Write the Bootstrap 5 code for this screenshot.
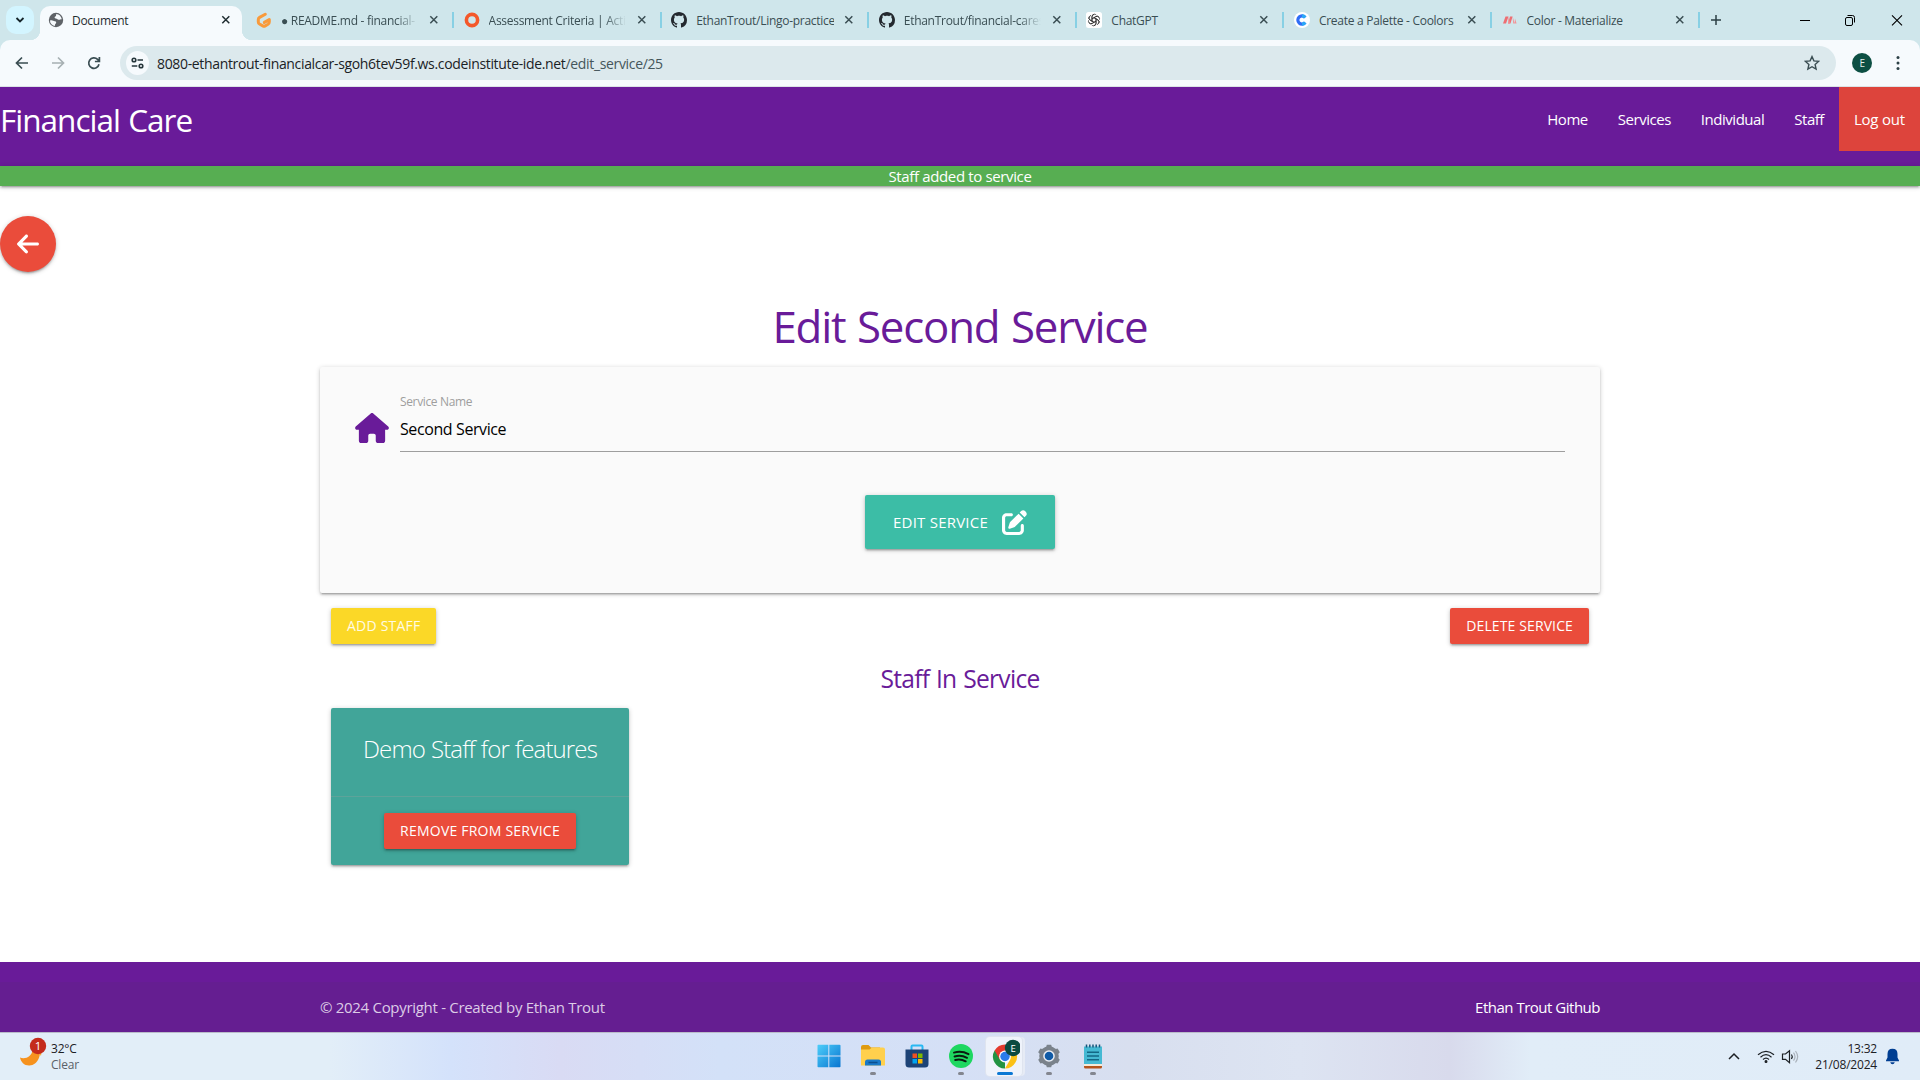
<!DOCTYPE html>
<html lang="en">
<head>
<meta charset="utf-8">
<meta name="viewport" content="width=device-width, initial-scale=1">
<title>Document</title>
<link href="https://cdn.jsdelivr.net/npm/bootstrap@5.3.0/dist/css/bootstrap.min.css" rel="stylesheet">
<style>
  body { width: 1920px; height: 1080px; overflow: hidden; font-family: "Open Sans", sans-serif; font-size: 15px; letter-spacing: -.36px; line-height: 1.5; color: #000; background: #fff; }
  a { text-decoration: none; }
  svg { display: block; flex: none; }
  .shade { box-shadow: 0 2px 2px 0 rgba(0,0,0,.14), 0 3px 1px -2px rgba(0,0,0,.12), 0 1px 5px 0 rgba(0,0,0,.2); }

  /* browser window */
  .tabstrip { height: 40px; background: #cfe6eb; padding-left: 6px; font-size: 12px; letter-spacing: -.28px; color: #3a4e53; }
  .tab-search { width: 28px; height: 28px; margin-top: 6px; border-radius: 10px; background: #d3f5ff; }
  .tab-open { position: relative; width: 202px; height: 34px; margin: 6px 4.4px 0 6px; padding: 0 11px 6px 8px; border-radius: 10px 10px 0 0; background: #f6fafd; color: #1f2c30; }
  .tab-open::before, .tab-open::after { content: ""; position: absolute; bottom: 0; width: 10px; height: 10px; }
  .tab-open::before { left: -10px; background: radial-gradient(circle at 0 0, transparent 10px, #f6fafd 10.5px); }
  .tab-open::after { right: -10px; background: radial-gradient(circle at 100% 0, transparent 10px, #f6fafd 10.5px); }
  .tab-idle { width: 207.6px; height: 40px; padding: 0 15px 0 9.6px; background: linear-gradient(#87d0e4,#87d0e4) right 0 top 12px/2px 16px no-repeat; }
  .tab-text { width: 138px; margin-left: 9px; padding-top: 2px; overflow: hidden; white-space: nowrap; }
  .tab-text.fade-end { -webkit-mask-image: linear-gradient(90deg, #000 115px, transparent 137px); mask-image: linear-gradient(90deg, #000 115px, transparent 137px); }
  .toolbar { height: 47px; background: #cfe6eb; }
  .toolbar-in { height: 47px; padding: 0 11px 0 14px; border-radius: 10px 10px 0 0; background: #f6fafd; border-bottom: 1px solid #dbe3e6; }
  .omnibox { width: 1716px; height: 34px; padding: 0 16px 0 6px; border-radius: 17px; background: #dce9ed; font-size: 14px; letter-spacing: -.34px; color: #45565b; margin-left: 17px; }
  .omnibox b { font-weight: 400; color: #1a2225; }
  .site-info { width: 23px; height: 24px; border-radius: 50%; background: #f6fafd; margin-right: 8px; }
  .avatar { width: 20px; height: 20px; border-radius: 50%; background: #0d4f43; color: #e5efed; font-size: 10px; }

  /* page */
  .page-nav { height: 79px; background: #691b99; }
  .site-name { font-size: 31.5px; letter-spacing: -.98px; word-spacing: 1px; line-height: 64px; color: #fff; margin-top: 1px; }
  .page-nav .links { letter-spacing: -.47px; }
  .page-nav .links a { height: 64px; line-height: 64px; padding: 0 15px; color: #fff; display: block; }
  .page-nav .links .exit { background: #dd443c; letter-spacing: -.2px; }
  .flash { height: 20px; line-height: 21px; background: #57ae52; color: #fff; }
  .back { width: 56px; height: 56px; border-radius: 50%; background: #ea4c3b; margin-top: 30px; }
  .purple { color: #691b99; }
  .wrap { width: 1280px; margin: 0 auto; }
  .heading { font-size: 43.8px; letter-spacing: -1.22px; word-spacing: 1.5px; line-height: 48px; margin: 30px 0 17px; }
  .panel { height: 226px; background: #fafafa; border-radius: 2px; padding: 24px 35px 0; }
  .house { margin-top: 22px; }
  .field { margin-left: 11px; }
  .f-label { font-size: 12px; line-height: 18px; color: #9e9e9e; margin-top: 2px; }
  .f-value { height: 41px; border-bottom: 1px solid #9e9e9e; font-size: 16px; line-height: 36px; letter-spacing: -.4px; }
  .submit-row { margin-top: 43px; }
  .mbtn { display: inline-flex; align-items: center; justify-content: center; height: 36px; padding-bottom: 2px; border-radius: 2px; color: #fff; font-size: 14px; letter-spacing: .22px; }
  .mbtn.delete { letter-spacing: .12px; }
  .mbtn-lg { width: 190px; height: 54px; padding-bottom: 0; background: #3cbda6; font-size: 15px; gap: 14px; }
  .red { background: #ea4c3b; }
  .yellow { background: #fbd827; color: #fffbe4; }
  .actions { padding: 15px 11px 0; }
  .subhead { font-size: 24.6px; letter-spacing: -.72px; word-spacing: 1px; line-height: 27px; margin: 21px 0 16px; }
  .person { width: 298px; height: 157px; border-radius: 2px; background: #41a599; margin-left: 11px; }
  .person-name { height: 88px; line-height: 82px; font-size: 24px; font-weight: 300; letter-spacing: -.86px; word-spacing: .6px; color: #fff; }
  .person-act { height: 69px; border-top: 1px solid rgba(160,160,160,.3); }
  .page-foot { height: 70px; background: linear-gradient(#691b99 20px, #651e91 20px); padding-top: 20px; color: #dccbe6; letter-spacing: -.3px; line-height: 50px; }
  .page-foot a { color: #fff; letter-spacing: -.49px; }

  /* taskbar */
  .taskbar { height: 48px; border-top: 1px solid #b9bcc9; font-size: 12px; line-height: 16px; letter-spacing: -.2px; color: #1c2024;
    background: linear-gradient(90deg, #e2eef8 0, #e2eef8 330px, #d4e2fb 450px, #d9dbf4 560px, #d3e1f8 720px, #d5e0f6 960px, #d8dfef 1130px, #dde4f2 1300px, #d8daec 1450px, #e1edf8 1530px, #e0ecf8 100%); }
  .side { width: 806.5px; }
  .weather { margin-left: 3px; padding-top: 4px; }
  .weather span { color: #5a6168; }
  .task { position: relative; width: 44.1px; height: 47px; padding-bottom: 1px; }
  .task::after { content: ""; position: absolute; left: 50%; top: 39px; width: 6px; height: 3px; margin-left: -3px; border-radius: 2px; }
  .task.running::after { background: #83868f; }
  .task.current::after { width: 16px; margin-left: -8px; background: #0a78d4; }
  .task.current::before { content: ""; position: absolute; left: 3px; top: 4px; width: 36px; height: 39px; border-radius: 4px; background: #eff3fb; box-shadow: 0 0 0 1px #dfe4ef, 3px 0 0 0 #e6ebf5; }
  .task svg { position: relative; }
  .tray { padding-right: 20px; }
  .clock { margin: 0 8px 0 15px; }
</style>
<script src="https://cdn.jsdelivr.net/npm/bootstrap@5.3.0/dist/js/bootstrap.bundle.min.js"></script>
</head>
<body class="d-flex flex-column">
<svg width="0" height="0" class="position-absolute">
  <symbol id="x" viewBox="0 0 10 10"><path d="M1.3 1.3l7 7m0-7l-7 7" stroke="currentColor" stroke-width="1.5" fill="none"/></symbol>
  <symbol id="gh" viewBox="0 0 16 16"><path fill="#24292f" d="M8 0C3.58 0 0 3.58 0 8c0 3.54 2.29 6.53 5.47 7.59.4.07.55-.17.55-.38 0-.19-.01-.82-.01-1.49-2.01.37-2.53-.49-2.69-.94-.09-.23-.48-.94-.82-1.13-.28-.15-.68-.52-.01-.53.63-.01 1.08.58 1.23.82.72 1.21 1.87.87 2.33.66.07-.52.28-.87.51-1.07-1.78-.2-3.64-.89-3.64-3.95 0-.87.31-1.59.82-2.15-.08-.2-.36-1.02.08-2.12 0 0 .67-.21 2.2.82.64-.18 1.32-.27 2-.27s1.36.09 2 .27c1.53-1.04 2.2-.82 2.2-.82.44 1.1.16 1.92.08 2.12.51.56.82 1.27.82 2.15 0 3.07-1.87 3.75-3.65 3.95.29.25.54.73.54 1.48 0 1.07-.01 1.93-.01 2.2 0 .21.15.46.55.38A8.01 8.01 0 0016 8c0-4.42-3.58-8-8-8z"/></symbol>
</svg>

<div class="tabstrip d-flex">
  <div class="tab-search d-flex align-items-center justify-content-center"><svg width="10" height="10" viewBox="0 0 10 10"><path d="M1.5 3L5 6.5 8.5 3" fill="none" stroke="#16262b" stroke-width="1.8"/></svg></div>
  <div class="tab-open d-flex align-items-center">
    <svg width="16" height="16" viewBox="0 0 16 16"><circle cx="8" cy="8" r="7.2" fill="#5f6368"/><path d="M2 8.5c2.500-.8 3.200.6 4.800.8 1.800.2 1.700 1.700.8 2.500-.9.8-.4 1.700-.9 2.200C4 13.300 1.900 11.300 2 8.500zM8.300 1.900c-.6 1.400.300 1.900-1 2.600-1.200.6-.7 1.900.500 1.900 1.300 0 1.500.9 2.800 1.300 1.300.3 1.700-.6 3.200-.5C13.200 4.200 11.200 2 8.300 1.900z" fill="#f6fafd"/></svg>
    <span class="tab-text ms-2">Document</span>
    <svg class="ms-auto" width="10" height="10"><use href="#x"/></svg>
  </div>
  <div class="tab-idle d-flex align-items-center">
    <svg width="16" height="17" viewBox="0 0 16 17"><path d="M9.300 2.200L3.600 5.400Q2.300 6.200 2.300 7.600V10q0 1.300 1.200 2L6.800 13.900q1.200.7 2.400 0L12 12.300q1.300-.8 1.300-2.200V7.600L8.300 10.400" fill="none" stroke="#f99a3a" stroke-width="3" stroke-linecap="round" stroke-linejoin="round"/></svg>
    <span class="tab-text fade-end">● README.md - financial-</span><svg class="ms-auto" width="10" height="10"><use href="#x"/></svg>
  </div>
  <div class="tab-idle d-flex align-items-center">
    <svg width="16" height="16" viewBox="0 0 16 16"><circle cx="8" cy="8" r="5.600" fill="none" stroke="#f4582a" stroke-width="3.600"/></svg>
    <span class="tab-text fade-end">Assessment Criteria | Activ</span><svg class="ms-auto" width="10" height="10"><use href="#x"/></svg>
  </div>
  <div class="tab-idle d-flex align-items-center">
    <svg width="16" height="16"><use href="#gh"/></svg>
    <span class="tab-text">EthanTrout/Lingo-practice</span><svg class="ms-auto" width="10" height="10"><use href="#x"/></svg>
  </div>
  <div class="tab-idle d-flex align-items-center">
    <svg width="16" height="16"><use href="#gh"/></svg>
    <span class="tab-text fade-end">EthanTrout/financial-cares</span><svg class="ms-auto" width="10" height="10"><use href="#x"/></svg>
  </div>
  <div class="tab-idle d-flex align-items-center">
    <svg width="16" height="16" viewBox="0 0 16 16"><rect width="16" height="16" rx="2.500" fill="#fff"/><g fill="none" stroke="#333" stroke-width=".8"><path id="petal" d="M6 9.200V4.800Q6 2.300 8.200 2.200 9.600 2.200 10.400 3.200M6 6.800L9.800 4.600Q11.600 3.800 12.900 5.300"/><use href="#petal" transform="rotate(60 8 8)"/><use href="#petal" transform="rotate(120 8 8)"/><use href="#petal" transform="rotate(180 8 8)"/><use href="#petal" transform="rotate(240 8 8)"/><use href="#petal" transform="rotate(300 8 8)"/></g></svg>
    <span class="tab-text">ChatGPT</span><svg class="ms-auto" width="10" height="10"><use href="#x"/></svg>
  </div>
  <div class="tab-idle d-flex align-items-center">
    <svg width="16" height="16" viewBox="0 0 16 16"><circle cx="8" cy="8" r="8" fill="#fff"/><path d="M11.200 5.500A4.100 4.100 0 1 0 11.200 10.500" fill="none" stroke="#2f6df6" stroke-width="3.200"/><path d="M11.200 5.500A4.100 4.100 0 0 0 8 3.900M8 12.100a4.100 4.100 0 0 0 3.200-1.600" fill="none" stroke="#29a9f5" stroke-width="3.200"/></svg>
    <span class="tab-text">Create a Palette - Coolors</span><svg class="ms-auto" width="10" height="10"><use href="#x"/></svg>
  </div>
  <div class="tab-idle d-flex align-items-center">
    <svg width="16" height="16" viewBox="0 0 16 16"><path d="M3.500 4.500h3L4 11.500H1zM8 4.500h2.600L8.500 11.500H6z" fill="#ee6e73"/><path d="M6.500 4.500L6 11.500h2zM10.600 4.500l.6 7h1.500zM13 6.500l1.600 5h-2z" fill="#f29397"/></svg>
    <span class="tab-text">Color - Materialize</span><svg class="ms-auto" width="10" height="10"><use href="#x"/></svg>
  </div>
  <div class="d-flex align-items-center flex-grow-1 pe-2">
    <svg class="ms-2 me-auto" width="16" height="16" viewBox="0 0 16 16"><path d="M8 3v10M3 8h10" stroke="#2c4046" stroke-width="1.500"/></svg>
    <svg class="me-1" width="120" height="20" viewBox="0 0 120 20" fill="none" stroke="#000"><path d="M12 10.500h10"/><rect x="57.500" y="7.500" width="7" height="8" rx="1.500"/><path d="M59.500 5.500h5q2 0 2 2v5"/><path d="M104 5.300l10 10m0-10l-10 10" stroke-width="1.100"/></svg>
  </div>
</div>

<div class="toolbar"><div class="toolbar-in d-flex align-items-center">
  <svg width="89" height="16" viewBox="0 0 89 16" fill="none" stroke="#3a4d52" stroke-width="1.700"><path d="M14 8H2.800M8 2.500L2.500 8 8 13.500"/><path d="M38 8h11.200M44 2.500L49.500 8 44 13.500" stroke="#a7b0b3"/><path d="M85 9.200A5.200 5.200 0 1 1 83.600 4.400L85.300 6.200M85.400 2v4.500h-4.500"/></svg>
  <div class="omnibox d-flex align-items-center">
    <span class="site-info d-flex align-items-center justify-content-center"><svg width="13" height="12" viewBox="0 0 13 12" fill="none" stroke="#26363b" stroke-width="1.600"><circle cx="3" cy="3" r="1.800"/><path d="M6.500 3H12M.8 9h5.500"/><circle cx="10" cy="9" r="1.800"/></svg></span>
    <span><b>8080-ethantrout-financialcar-sgoh6tev59f.ws.codeinstitute-ide.net</b>/edit_service/25</span>
    <svg class="ms-auto" width="16" height="16" viewBox="0 0 16 16"><path d="M8 1.600l1.900 4.300 4.700.5-3.500 3.100 1 4.600L8 11.700l-4.100 2.400 1-4.600L1.400 6.400l4.700-.5z" fill="none" stroke="#3a4d52" stroke-width="1.400"/></svg>
  </div>
  <span class="avatar d-flex align-items-center justify-content-center ms-3">E</span>
  <svg class="ms-auto" width="20" height="16" viewBox="0 0 20 16" fill="#2c4046"><circle cx="9" cy="2.500" r="1.500"/><circle cx="9" cy="8" r="1.500"/><circle cx="9" cy="13.500" r="1.500"/></svg>
</div></div>

<nav class="page-nav d-flex justify-content-between align-items-start">
  <a href="#" class="site-name">Financial Care</a>
  <div class="links d-flex">
    <a href="#">Home</a><a href="#">Services</a><a href="#">Individual</a><a href="#">Staff</a><a href="#" class="exit">Log out</a>
  </div>
</nav>
<div class="flash text-center shade">Staff added to service</div>

<main class="flex-grow-1">
  <a href="#" class="back shade d-flex align-items-center justify-content-center"><svg width="22" height="26" viewBox="0 0 448 512" fill="#fff"><path d="M9.400 233.400c-12.500 12.500-12.500 32.800 0 45.300l160 160c12.500 12.500 32.800 12.500 45.300 0s12.500-32.800 0-45.300L109.200 288 416 288c17.700 0 32-14.300 32-32s-14.300-32-32-32l-306.700 0L214.600 118.600c12.500-12.500 12.500-32.800 0-45.300s-32.800-12.500-45.300 0l-160 160z"/></svg></a>
  <div class="wrap">
    <h3 class="heading purple text-center fw-normal">Edit Second Service</h3>
    <div class="panel shade">
      <div class="d-flex align-items-start">
        <svg class="house" width="34" height="30" viewBox="0 0 576 512" fill="#691b99"><path d="M575.800 255.500c0 18-15 32.100-32 32.100h-32l.7 160.200c0 2.700-.2 5.400-.5 8.100V472c0 22.100-17.900 40-40 40H392c-22.100 0-40-17.900-40-40V384c0-17.700-14.300-32-32-32H256c-17.700 0-32 14.300-32 32v88c0 22.100-17.900 40-40 40H104c-22.100 0-40-17.900-40-40V287.600H32c-18 0-32-14-32-32.100c0-9 3-17 10-24L266.400 8c7-7 15-8 22-8s15 2 21 7L564.800 231.500c8 7 12 15 11 24z"/></svg>
        <div class="field flex-grow-1">
          <div class="f-label">Service Name</div>
          <div class="f-value">Second Service</div>
        </div>
      </div>
      <div class="submit-row text-center">
        <a href="#" class="mbtn mbtn-lg shade">EDIT SERVICE <svg width="25" height="25" viewBox="0 0 512 512" fill="#fff"><path d="M471.600 21.700c-21.900-21.900-57.300-21.900-79.200 0L362.300 51.700l97.900 97.900 30.100-30.100c21.900-21.900 21.900-57.300 0-79.200L471.600 21.700zm-299.200 220c-6.100 6.100-10.800 13.600-13.500 21.900l-29.600 88.800c-2.900 8.600-.6 18.100 5.800 24.600s15.900 8.700 24.600 5.800l88.800-29.600c8.200-2.700 15.700-7.400 21.900-13.500L437.700 172.300 339.700 74.300 172.400 241.700zM96 64C43 64 0 107 0 160V416c0 53 43 96 96 96H352c53 0 96-43 96-96V320c0-17.700-14.300-32-32-32s-32 14.300-32 32v96c0 17.700-14.300 32-32 32H96c-17.700 0-32-14.300-32-32V160c0-17.700 14.300-32 32-32h96c17.700 0 32-14.300 32-32s-14.300-32-32-32H96z"/></svg></a>
      </div>
    </div>
    <div class="actions d-flex justify-content-between">
      <a href="#" class="mbtn yellow shade px-3">ADD STAFF</a>
      <a href="#" class="mbtn delete red shade px-3">DELETE SERVICE</a>
    </div>
    <h5 class="subhead purple text-center fw-normal">Staff In Service</h5>
    <div class="person shade text-center">
      <div class="person-name">Demo Staff for features</div>
      <div class="person-act d-flex align-items-center justify-content-center"><a href="#" class="mbtn red shade px-3">REMOVE FROM SERVICE</a></div>
    </div>
  </div>
</main>

<footer class="page-foot"><div class="wrap d-flex justify-content-between"><span>© 2024 Copyright - Created by Ethan Trout</span><a href="#">Ethan Trout Github</a></div></footer>

<div class="taskbar d-flex">
  <div class="side d-flex ps-3 pt-1">
    <svg width="32" height="34" viewBox="0 0 32 34"><path d="M4 20.500c5 2.300 12-1 12.500-7.500L22 10c5 6-.2 19-9 18.500-5 0-8-3.500-9-8z" fill="#f6921e"/><path d="M16 13l7-3q3 4 2 9-3-5-9-6z" fill="#f8b332"/><circle cx="22" cy="9" r="8.200" fill="#c42b1c"/><text x="22" y="13" font-size="11.500" text-anchor="middle" fill="#fff">1</text></svg>
    <div class="weather">32°C<br><span>Clear</span></div>
  </div>
  <div class="task d-flex align-items-center justify-content-center"><svg width="24" height="24" viewBox="0 0 24 24"><defs><linearGradient id="w" gradientUnits="userSpaceOnUse" x1="0" y1="0" x2="24" y2="24"><stop stop-color="#4fd0fb"/><stop offset="1" stop-color="#0672cf"/></linearGradient></defs><path fill="url(#w)" d="M.5 1.500a.8.800 0 0 1 .8-.8h10v10.800H.5zM12.300.7h10.200q1 0 1 .8v10H12.300zM.5 12.500h10.800v10.800h-10q-.8 0-.8-.8zM12.300 12.500h11.200v10q0 .8-.8.800H12.300z"/></svg></div>
  <div class="task running d-flex align-items-center justify-content-center"><svg width="26" height="24" viewBox="0 0 26 24"><path d="M1 3q0-2 2-2h5.500l2.500 2.500H20V8H1z" fill="#df9b10"/><path d="M1 5.500h8.500L12 3.500h11q2 0 2 2v16H1z" fill="#ffd04d"/><path d="M5 21.500V18q0-2.500 2.500-2.500h11Q21 15.500 21 18v3.500z" fill="#1979c8"/><path d="M8.500 18.500h9" stroke="#0b4f8f" stroke-width="1.500"/></svg></div>
  <div class="task d-flex align-items-center justify-content-center"><svg width="24" height="24" viewBox="0 0 24 24"><path d="M6.500 6V2.500q0-1 1-1h9q1 0 1 1V6" fill="none" stroke="#29b8f2" stroke-width="2"/><path d="M.5 5.500h23V20q0 3.500-3.500 3.500H4Q.5 23.500.5 20z" fill="#1d4377"/><path d="M7.500 9.500H12v4.500H7.500z" fill="#f25022"/><path d="M13 9.500h4.500v4.500H13z" fill="#7fba00"/><path d="M7.500 15H12v4.500H7.500z" fill="#00a4ef"/><path d="M13 15h4.500v4.500H13z" fill="#ffb900"/></svg></div>
  <div class="task running d-flex align-items-center justify-content-center"><svg width="24" height="24" viewBox="0 0 24 24"><circle cx="12" cy="12" r="12" fill="#1ed760"/><path d="M5 8.600q7.500-2.200 14.500 1.500M5.600 12.500q6.500-1.800 12.400 1.300M6.200 16q5.500-1.400 10.500 1.300" fill="none" stroke="#0b1a10" stroke-width="2" stroke-linecap="round"/></svg></div>
  <div class="task current d-flex align-items-center justify-content-center"><svg width="30" height="34" viewBox="0 0 30 34"><path d="M15 17.500L15 29.500A12 12 0 0 1 4.600 11.500z" fill="#229342"/><path d="M4.600 11.500L9.800 20.500 15 17.500V11.500H25.400A12 12 0 0 0 4.600 11.500z" fill="#e33b2e"/><path d="M15 29.500L20.200 20.500 20.200 11.500H25.400A12 12 0 0 1 15 29.500z" fill="#fbc116"/><circle cx="15" cy="17.500" r="5.900" fill="#fff"/><circle cx="15" cy="17.500" r="4.700" fill="#2a7bea"/><circle cx="23" cy="9" r="8.200" fill="#0b4a40"/><text x="23" y="12.500" font-size="9.500" text-anchor="middle" fill="#fff">E</text></svg></div>
  <div class="task running d-flex align-items-center justify-content-center"><svg width="24" height="24" viewBox="0 0 24 24"><g fill="#7a828b"><circle cx="12" cy="12" r="9.800"/><path id="cog" d="M8.800 4.500L9.800.8h4.400l1 3.700v15l-1 3.700H9.800l-1-3.700z"/><use href="#cog" transform="rotate(60 12 12)"/><use href="#cog" transform="rotate(120 12 12)"/></g><circle cx="12" cy="12" r="5.800" fill="#e9edf4"/><circle cx="12" cy="12" r="4.300" fill="#0f5aa6"/></svg></div>
  <div class="task running d-flex align-items-center justify-content-center"><svg width="20" height="25" viewBox="0 0 20 25"><path d="M1 19h18v4q0 1.500-1.500 1.500h-15Q1 24.500 1 23z" fill="#b5541c"/><path d="M1 19h18v3H1z" fill="#f4ead8"/><path d="M1 2.500h18V20H1z" fill="#45b9d3"/><path d="M3.500.5v3M6.800.5v3M10 .5v3M13.200.5v3M16.500.5v3" stroke="#14547a" stroke-width="1.500"/><path d="M4 8.200h12M4 12h12M4 15.800h12" stroke="#136886" stroke-width="1.600"/></svg></div>
  <div class="tray ms-auto d-flex align-items-center">
    <svg width="76" height="20" viewBox="0 0 76 20" fill="none" stroke="#1c2024" stroke-width="1.500"><path d="M5 12l5-5 5 5"/><g stroke-width="1.200"><path d="M34 7.800q8-7 16 0M36.500 10.200q5.500-5 11 0M39 12.500q3-2.700 6 0"/><circle cx="42" cy="14.500" r=".9" fill="#1c2024"/><path d="M58.500 7h3l4-3.300v12l-4-3.300h-3z"/><path d="M67.500 7.500q1.500 2 0 4.500"/><path d="M69.500 5.700q3 4 0 8M71.500 4q4.300 5.800 0 11.500" stroke="#aab2bb"/></g></svg>
    <div class="clock text-end">13:32<br>21/08/2024</div>
    <svg width="15" height="17" viewBox="0 0 15 17" fill="#003e92"><path d="M7.500.8q5 0 5 5.200v3.500L14 12.500v.8H1v-.8L2.500 9.500V6Q2.500.8 7.500.8zM5.200 14.300h4.600q-.6 1.900-2.300 1.900t-2.300-1.900z"/></svg>
  </div>
</div>
</body>
</html>
